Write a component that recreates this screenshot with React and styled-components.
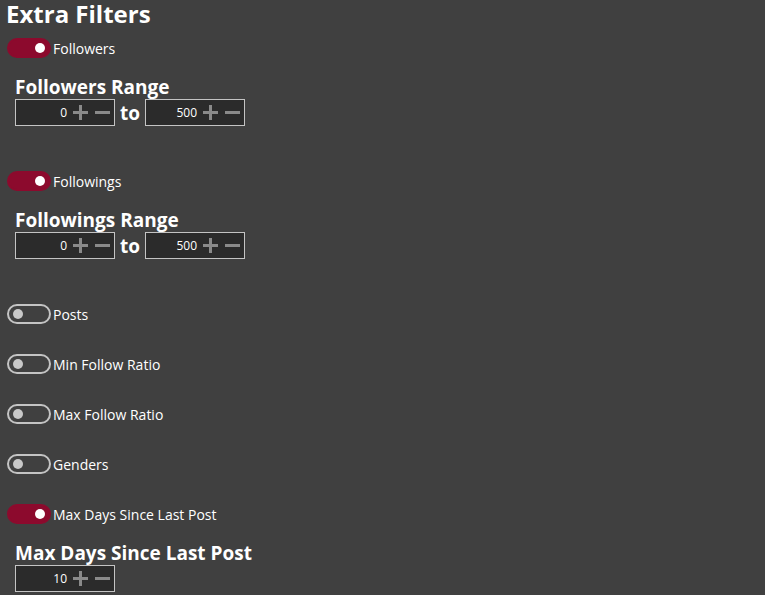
import React, { useState } from "react";
import styled, { createGlobalStyle } from "styled-components";

const GlobalStyle = createGlobalStyle`
  html, body {
    margin: 0;
    background: #404040;
    font-family: "Open Sans", "Noto Sans", "Liberation Sans", sans-serif;
    color: #ffffff;
  }
`;

function Plus() {
  return (
    <svg width="15" height="15" viewBox="0 0 15 15">
      <path d="M7.5 0v15M0 7.5h15" stroke="#8a8a8a" strokeWidth="3" />
    </svg>
  );
}

function Minus() {
  return (
    <svg width="15" height="15" viewBox="0 0 15 15">
      <path d="M0 7.5h15" stroke="#8a8a8a" strokeWidth="3" />
    </svg>
  );
}

function Toggle({ on, onClick }) {
  return (
    <Switch $on={on} onClick={onClick}>
      <Knob $on={on} />
    </Switch>
  );
}

function NumberBox({ value }) {
  return (
    <Box>
      <Value>{value}</Value>
      <Step><Plus /></Step>
      <Step><Minus /></Step>
    </Box>
  );
}

const filters = [
  { name: "Followers", on: true, range: ["Followers Range", 0, 500] },
  { name: "Followings", on: true, range: ["Followings Range", 0, 500] },
  { name: "Posts", on: false },
  { name: "Min Follow Ratio", on: false },
  { name: "Max Follow Ratio", on: false },
  { name: "Genders", on: false },
  { name: "Max Days Since Last Post", on: true, single: ["Max Days Since Last Post", 10] },
];

export default function App() {
  const [state, setState] = useState(filters.map((f) => f.on));
  const flip = (i) => setState((s) => s.map((v, j) => (j === i ? !v : v)));

  return (
    <>
      <GlobalStyle />
      <Page>
        <Title>Extra Filters</Title>
        <List>
          {filters.map((f, i) => (
            <Filter key={f.name}>
              <ToggleRow>
                <Toggle on={state[i]} onClick={() => flip(i)} />
                <Label>{f.name}</Label>
              </ToggleRow>
              {f.range && state[i] && (
                <Section>
                  <Heading>{f.range[0]}</Heading>
                  <Inputs>
                    <NumberBox value={f.range[1]} />
                    <To>to</To>
                    <NumberBox value={f.range[2]} />
                  </Inputs>
                </Section>
              )}
              {f.single && state[i] && (
                <Section>
                  <Heading>{f.single[0]}</Heading>
                  <Inputs>
                    <NumberBox value={f.single[1]} />
                  </Inputs>
                </Section>
              )}
            </Filter>
          ))}
        </List>
      </Page>
    </>
  );
}

const Page = styled.div`
  padding: 1px 6px 0;
`;

const Title = styled.h1`
  margin: 0;
  font-size: 24px;
  font-weight: 700;
  line-height: 26px;
`;

const List = styled.div`
  display: flex;
  flex-direction: column;
  gap: 30px;
  margin-top: 11px;
`;

const Filter = styled.div`
  display: flex;
  flex-direction: column;
`;

const ToggleRow = styled.div`
  display: flex;
  align-items: center;
  height: 20px;
  padding-left: 1px;
`;

const Switch = styled.div`
  box-sizing: border-box;
  width: 44px;
  height: 20px;
  border-radius: 10px;
  background: ${(p) => (p.$on ? "#8c0a2d" : "transparent")};
  border: 2px solid ${(p) => (p.$on ? "#8c0a2d" : "#c4c4c4")};
  display: flex;
  align-items: center;
  justify-content: ${(p) => (p.$on ? "flex-end" : "flex-start")};
  padding: 0 4px;
  cursor: pointer;
`;

const Knob = styled.div`
  width: 10px;
  height: 10px;
  border-radius: 50%;
  background: ${(p) => (p.$on ? "#ffffff" : "#c8c8c8")};
`;

const Label = styled.span`
  margin-left: 2px;
  font-size: 14px;
`;

const Section = styled.div`
  padding-left: 9px;
  margin-top: 17px;
  margin-bottom: 15px;
`;

const Heading = styled.h2`
  margin: 0;
  font-size: 19px;
  font-weight: 700;
  line-height: 24px;
`;

const Inputs = styled.div`
  display: flex;
  align-items: center;
  gap: 5px;
`;

const Box = styled.div`
  box-sizing: border-box;
  width: 100px;
  height: 27px;
  border: 1px solid #c4c4c4;
  background: #2b2b2b;
  display: flex;
  align-items: center;
  justify-content: flex-end;
  padding-right: 4px;
  gap: 7px;
`;

const Value = styled.span`
  font-size: 12px;
  margin-right: -1px;
`;

const Step = styled.span`
  display: flex;
`;

const To = styled.span`
  font-size: 19px;
  font-weight: 700;
`;
